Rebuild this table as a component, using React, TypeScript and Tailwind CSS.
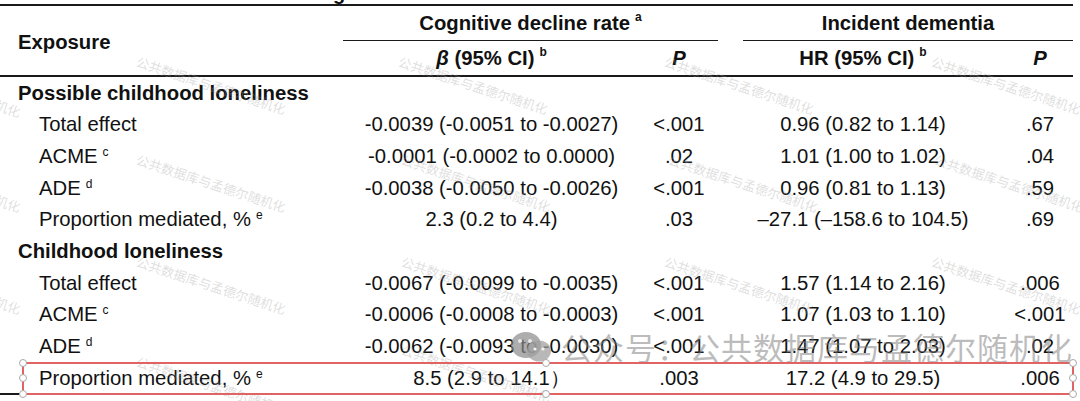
import React from 'react';

const cols = 'grid grid-cols-[343px_297px_78px_25px_240px_90px]';

type Row = {
  label: string;
  sup?: string;
  beta: string;
  p1: string;
  hr: string;
  p2: string;
};

const groups: { title: string; rows: Row[] }[] = [
  {
    title: 'Possible childhood loneliness',
    rows: [
      { label: 'Total effect', beta: '-0.0039 (-0.0051 to -0.0027)', p1: '<.001', hr: '0.96 (0.82 to 1.14)', p2: '.67' },
      { label: 'ACME', sup: 'c', beta: '-0.0001 (-0.0002 to 0.0000)', p1: '.02', hr: '1.01 (1.00 to 1.02)', p2: '.04' },
      { label: 'ADE', sup: 'd', beta: '-0.0038 (-0.0050 to -0.0026)', p1: '<.001', hr: '0.96 (0.81 to 1.13)', p2: '.59' },
      { label: 'Proportion mediated, %', sup: 'e', beta: '2.3 (0.2 to 4.4)', p1: '.03', hr: '–27.1 (–158.6 to 104.5)', p2: '.69' },
    ],
  },
  {
    title: 'Childhood loneliness',
    rows: [
      { label: 'Total effect', beta: '-0.0067 (-0.0099 to -0.0035)', p1: '<.001', hr: '1.57 (1.14 to 2.16)', p2: '.006' },
      { label: 'ACME', sup: 'c', beta: '-0.0006 (-0.0008 to -0.0003)', p1: '<.001', hr: '1.07 (1.03 to 1.10)', p2: '<.001' },
      { label: 'ADE', sup: 'd', beta: '-0.0062 (-0.0093 to -0.0030)', p1: '<.001', hr: '1.47 (1.07 to 2.03)', p2: '.02' },
      { label: 'Proportion mediated, %', sup: 'e', beta: '8.5 (2.9 to 14.1）', p1: '.003', hr: '17.2 (4.9 to 29.5)', p2: '.006' },
    ],
  },
];

// faint diagonal watermark tiles
const marks = [
  [-125, 55], [140, 52], [402, 52], [668, 52], [935, 52],
  [-125, 150], [140, 150], [405, 150], [672, 150], [938, 150],
  [-125, 252], [140, 252], [405, 252], [668, 252], [935, 252],
  [140, 352], [405, 340],
];

function Handle({ className }: { className: string }) {
  return (
    <span className={`absolute w-[8px] h-[8px] rounded-full bg-white border border-[#a8a8a8] ${className}`} />
  );
}

function WeChat() {
  return (
    <svg width="50" height="32" viewBox="0 0 50 32">
      <ellipse cx="20" cy="14" rx="15" ry="13" fill="#8a8a8a" fillOpacity="0.7" />
      <ellipse cx="33" cy="20" rx="12" ry="10.5" fill="#a0a0a0" fillOpacity="0.75" />
      <circle cx="14" cy="10" r="2" fill="#e8e8e8" />
      <circle cx="24" cy="10" r="2" fill="#e8e8e8" />
      <circle cx="29" cy="18" r="1.6" fill="#f2f2f2" />
      <circle cx="37" cy="18" r="1.6" fill="#f2f2f2" />
    </svg>
  );
}

export default function App() {
  return (
    <div className="relative w-[1080px] h-[401px] bg-white overflow-hidden text-[#111] font-['Liberation_Sans',Arial,sans-serif]">
      {/* clipped descender of the table title above */}
      <div className="h-[4px] overflow-hidden pl-[333px]">
        <div className="text-[20px] font-bold leading-[20px] -mt-[17px]">g</div>
      </div>

      <div className="w-[1073px]">
        <div className="h-[1.5px] bg-[#1a1a1a]" />

        {/* header */}
        <div className={`${cols} grid-rows-[35.5px_34px] text-[20.3px] font-bold`}>
          <div className="col-start-1 row-start-1 row-span-2 flex items-center pl-[18px] pt-[3px]">Exposure</div>
          <div className="col-start-2 col-span-2 row-start-1 flex items-center justify-center border-b-[1.5px] border-[#1a1a1a]">
            Cognitive decline rate<sup className="text-[12px] ml-[5px] -top-[6px]">a</sup>
          </div>
          <div className="col-start-5 col-span-2 row-start-1 flex items-center justify-center border-b-[1.5px] border-[#1a1a1a]">
            Incident dementia
          </div>
          <div className="col-start-2 row-start-2 flex items-center justify-center">
            <span className="italic">β</span>&nbsp;(95% CI)<sup className="text-[12px] ml-[5px] -top-[6px]">b</sup>
          </div>
          <div className="col-start-3 row-start-2 flex items-center justify-center italic">P</div>
          <div className="col-start-5 row-start-2 flex items-center justify-center">
            HR (95% CI)<sup className="text-[12px] ml-[5px] -top-[6px]">b</sup>
          </div>
          <div className="col-start-6 row-start-2 flex items-center justify-center pl-[24px] italic">P</div>
        </div>

        <div className="h-[1.5px] bg-[#1a1a1a]" />

        {/* body */}
        <div className="text-[20.3px]">
          {groups.map((g) => (
            <div key={g.title}>
              <div className="h-[31.7px] flex items-center pl-[18px] pt-[1px] font-bold">{g.title}</div>
              {g.rows.map((r) => (
                <div key={g.title + r.label} className={`${cols} h-[31.7px] items-center pt-[1px]`}>
                  <div className="pl-[39px] whitespace-nowrap">
                    {r.label}
                    {r.sup && <sup className="text-[12px] ml-[5px] -top-[7px]">{r.sup}</sup>}
                  </div>
                  <div className="text-center whitespace-nowrap">{r.beta}</div>
                  <div className="text-center">{r.p1}</div>
                  <div />
                  <div className="text-center whitespace-nowrap">{r.hr}</div>
                  <div className="text-center pl-[24px]">{r.p2}</div>
                </div>
              ))}
            </div>
          ))}
        </div>

        <div className="h-[1.5px] bg-[#1a1a1a]" />
      </div>

      {/* faint diagonal watermarks */}
      {marks.map(([x, y], i) => (
        <div
          key={i}
          className="absolute pointer-events-none origin-top-left rotate-[18deg] whitespace-nowrap text-[13px] text-[#a0a0a0]/35 font-['Noto_Sans_CJK_SC',sans-serif]"
          style={{ left: x, top: y }}
        >
          公共数据库与孟德尔随机化
        </div>
      ))}

      {/* big account watermark */}
      <div className="absolute left-[506px] top-[330px] flex items-center gap-[5px] pointer-events-none">
        <WeChat />
        <span className="text-[31px] leading-[34px] tracking-[1px] text-[#7a7a7a]/50 font-['Noto_Sans_CJK_SC',sans-serif]">
          公众号：公共数据库与孟德尔随机化
        </span>
      </div>

      {/* selection box */}
      <div className="absolute left-[22px] top-[362px] w-[1052px] h-[33px] border-[2.5px] border-[#e06464] pointer-events-none">
        <Handle className="-left-[5px] -top-[5px]" />
        <Handle className="-left-[5px] top-[10px]" />
        <Handle className="-left-[5px] -bottom-[5px]" />
        <Handle className="left-[518px] -top-[5px]" />
        <Handle className="left-[518px] -bottom-[5px]" />
        <Handle className="-right-[5px] -top-[5px]" />
        <Handle className="-right-[5px] top-[10px]" />
        <Handle className="-right-[5px] -bottom-[5px]" />
      </div>
    </div>
  );
}
